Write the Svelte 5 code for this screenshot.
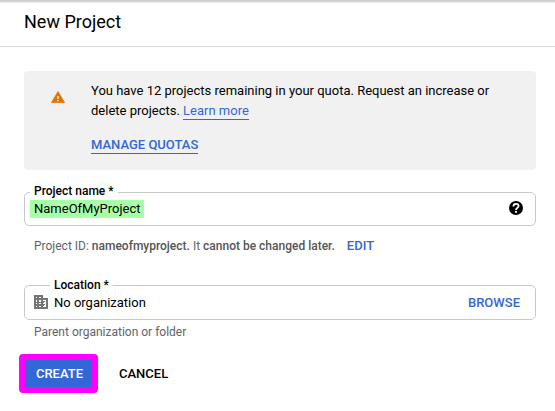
<script>
  let projectName = 'NameOfMyProject';
  let projectId = 'nameofmyproject.';
</script>

<div class="page">
  <header><h1>New Project</h1></header>

  <main>
    <section class="notice">
      <svg class="warning" viewBox="0 0 14 12" width="14" height="12" aria-hidden="true">
        <path fill="#e37400" stroke="#e37400" stroke-width=".8" stroke-linejoin="round" d="M7 .5L13.5 11.6H.5z" />
        <path fill="#f9e3cc" d="M6.2 5h1.6v3H6.2zM6.2 9h1.6v1.2H6.2z" />
      </svg>
      <div class="message">
        <p>
          You have 12 projects remaining in your quota. Request an increase or<br />
          delete projects. <a class="learn" href="#learn">Learn more</a>
        </p>
        <a class="quotas" href="#quotas">MANAGE QUOTAS</a>
      </div>
    </section>

    <div class="field name">
      <span class="label">Project name *</span>
      <span class="value marked">{projectName}</span>
      <svg class="help" viewBox="0 0 14 14" width="14" height="14" aria-hidden="true">
        <circle cx="7" cy="7" r="7" />
        <path fill="none" stroke="#fff" stroke-width="1.8" d="M4.4 5.4C4.4 3.8 5.5 2.9 7 2.9s2.6.9 2.6 2.2C9.6 6.8 7 6.8 7 9" />
        <path fill="#fff" d="M6 10h2v1.8H6z" />
      </svg>
    </div>
    <p class="hint id">
      Project ID: <b>{projectId}</b> It <b>cannot be changed later.</b>
      <a href="#edit">EDIT</a>
    </p>

    <div class="field location">
      <span class="label">Location *</span>
      <svg class="building" viewBox="0 0 14 14" width="14" height="14" shape-rendering="crispEdges" aria-hidden="true">
        <path fill="#757575" fill-rule="evenodd" d="M0 0h9v3h5v11H0zM2 2v1h1V2zM5 2v1h2V2zM2 5v2h1V5zM5 5v2h2V5zM2 8v1h1V8zM5 8v1h2V8zM2 11v1h1v-1zM5 11v1h2v-1zM9 5v1h1v2H9v1h1v2H9v1h3V5z" />
        <path fill="#757575" d="M10 6h1v1h-1zM10 9h1v1h-1z" />
      </svg>
      <span class="value">No organization</span>
      <a class="browse" href="#browse">BROWSE</a>
    </div>
    <p class="hint parent">Parent organization or folder</p>

    <div class="actions">
      <button class="create">CREATE</button>
      <button class="cancel">CANCEL</button>
    </div>
  </main>
</div>

<style>
  :global(body) {
    background: #fff;
  }

  .page {
    box-sizing: border-box;
    width: 555px;
    height: 411px;
    overflow: hidden;
    font: 13px/20px Roboto, sans-serif;
    color: #000;
    background: linear-gradient(#cecece 0 1px, #d4d4d4 1px 2px, #eee 2px 3px, #fafafa 3px 4px, #fff 4px);
  }

  header {
    box-sizing: border-box;
    height: 47px;
    padding: 10px 24px 0;
    border-bottom: 1px solid #dadada;
  }

  h1 {
    margin: 0;
    font-size: 18px;
    font-weight: 400;
    line-height: 24px;
  }

  main {
    padding: 24px 19px 0 24px;
  }

  p {
    margin: 0;
  }

  a {
    color: #3367d6;
    text-decoration: none;
  }

  .notice {
    display: flex;
    box-sizing: border-box;
    height: 99px;
    padding: 10px 0 0 27px;
    border-radius: 4px;
    background: #f1f1f1;
  }

  .warning {
    margin: 10px 26px 0 0;
  }

  .learn,
  .quotas {
    display: inline-block;
    line-height: 17px;
    border-bottom: 1px solid #3367d6;
  }

  .quotas {
    margin-top: 15px;
    font-weight: 500;
  }

  .field {
    position: relative;
    display: flex;
    align-items: center;
    box-sizing: border-box;
    height: 34px;
    border: 1px solid #c8c8c8;
    border-radius: 5px;
  }

  .field.name {
    margin-top: 22px;
    padding: 0 12px 0 5px;
  }

  .label {
    position: absolute;
    top: -10px;
    left: 5px;
    padding: 0 4px;
    font-size: 12px;
    font-weight: 500;
    line-height: 16px;
    background: #fff;
  }

  .marked {
    padding: 0 3px 0 4px;
    line-height: 18px;
    background: #a8ffa8;
  }

  .help {
    margin: 0 0 2px auto;
  }

  .hint {
    padding-left: 10px;
    font-size: 12px;
    line-height: 16px;
    color: #5f6368;
  }

  .hint b {
    font-weight: 500;
    color: #555;
  }

  .hint.id {
    margin-top: 12px;
  }

  .hint a {
    margin-left: 9px;
    font-size: 13px;
    font-weight: 500;
  }

  .field.location {
    height: 35px;
    margin-top: 31px;
    padding: 0 15px 0 9px;
  }

  .location .label {
    top: -9px;
    left: 25px;
  }

  .building {
    margin: 0 6px 1px 0;
  }

  .browse {
    margin-left: auto;
    font-weight: 500;
  }

  .hint.parent {
    margin-top: 4px;
  }

  .actions {
    display: flex;
    gap: 21px;
    margin: 14px 0 0 -5px;
  }

  button {
    box-sizing: border-box;
    height: 39px;
    padding: 0;
    border: 0;
    background: none;
    font: 500 13px/27px Roboto, sans-serif;
    color: #000;
  }

  .create {
    width: 79px;
    padding-left: 2px;
    border: 6px solid #f0f;
    border-radius: 4px;
    color: #fff;
    background: #3367d6;
  }
</style>
